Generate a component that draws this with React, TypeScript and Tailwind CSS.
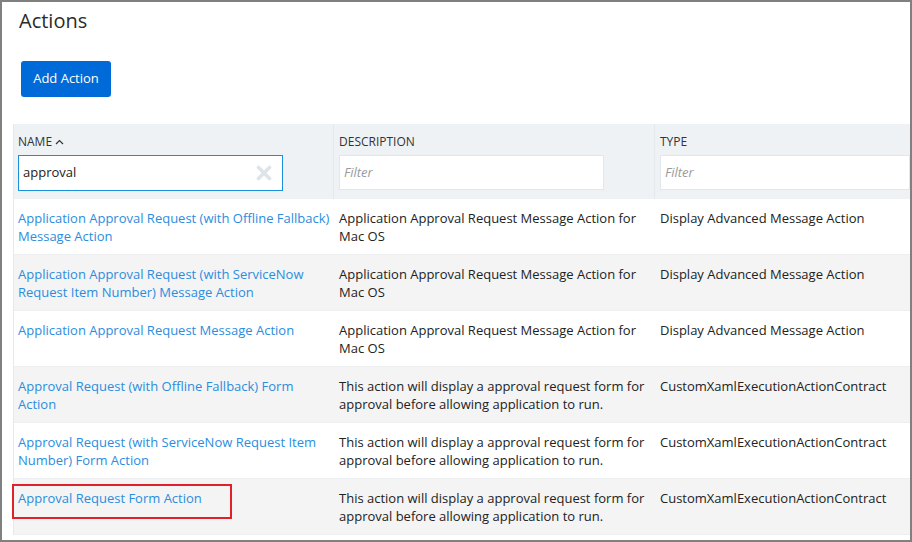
import React from "react";

type Row = { name: string[]; desc: string[]; type: string; highlight?: boolean };

const rows: Row[] = [
  {
    name: ["Application Approval Request (with Offline Fallback)", "Message Action"],
    desc: ["Application Approval Request Message Action for", "Mac OS"],
    type: "Display Advanced Message Action",
  },
  {
    name: ["Application Approval Request (with ServiceNow", "Request Item Number) Message Action"],
    desc: ["Application Approval Request Message Action for", "Mac OS"],
    type: "Display Advanced Message Action",
  },
  {
    name: ["Application Approval Request Message Action"],
    desc: ["Application Approval Request Message Action for", "Mac OS"],
    type: "Display Advanced Message Action",
  },
  {
    name: ["Approval Request (with Offline Fallback) Form", "Action"],
    desc: ["This action will display a approval request form for", "approval before allowing application to run."],
    type: "CustomXamlExecutionActionContract",
  },
  {
    name: ["Approval Request (with ServiceNow Request Item", "Number) Form Action"],
    desc: ["This action will display a approval request form for", "approval before allowing application to run."],
    type: "CustomXamlExecutionActionContract",
  },
  {
    name: ["Approval Request Form Action"],
    desc: ["This action will display a approval request form for", "approval before allowing application to run."],
    type: "CustomXamlExecutionActionContract",
    highlight: true,
  },
];

function Lines({ lines }: { lines: string[] }) {
  return (
    <>
      {lines.map((l, i) => (
        <div key={i} className="whitespace-nowrap">
          {l}
        </div>
      ))}
    </>
  );
}

export default function App() {
  return (
    <div
      className="w-[912px] h-[542px] bg-white border-2 border-[#808080] overflow-hidden text-[#222]"
      style={{ fontFamily: '"Open Sans", "Noto Sans", sans-serif' }}
    >
      <div className="pl-[17px] pt-[5px] h-[50px]">
        <h1 className="text-[20px] leading-[28px] text-[#2b2b2b] font-normal">Actions</h1>
      </div>
      <div className="pl-[19px] pt-[9px] h-[72px]">
        <button className="w-[90px] h-[36px] bg-[#006ad8] text-white text-[13px] rounded-[3px]">
          Add Action
        </button>
      </div>
      <div className="ml-[11px] border-l border-[#e6e9ec]">
        {/* header */}
        <div className="flex h-[75px] bg-[#eef2f5] text-[12px] text-[#333]">
          <div className="w-[320px] pl-[4px] pt-[9px] border-r border-[#e4e8ec]">
            <div className="flex items-center h-[18px] leading-[18px]">
              NAME
              <svg width="9" height="6" viewBox="0 0 9 6" className="ml-[3px]">
                <path d="M1 5 L4.5 1.5 L8 5" fill="none" stroke="#333" strokeWidth="1.2" />
              </svg>
            </div>
            <div className="mt-[4px] w-[265px] h-[36px] bg-white border border-[#1a90dd] flex items-center pl-[4px] pr-[10px]">
              <span className="text-[13px] text-[#222] flex-1">approval</span>
              <svg width="16" height="16" viewBox="0 0 16 16">
                <path d="M2.5 2.5 L13.5 13.5 M13.5 2.5 L2.5 13.5" stroke="#dfe4e9" strokeWidth="3.6" strokeLinecap="round" />
              </svg>
            </div>
          </div>
          <div className="w-[321px] pl-[5px] pt-[9px] border-r border-[#e4e8ec]">
            <div className="h-[18px] leading-[18px]">DESCRIPTION</div>
            <div className="mt-[4px] w-[265px] h-[35px] bg-white border border-[#e3e7eb] flex items-center pl-[4px]">
              <span className="text-[13px] italic text-[#9a9a9a]">Filter</span>
            </div>
          </div>
          <div className="flex-1 pl-[5px] pt-[9px]">
            <div className="h-[18px] leading-[18px]">TYPE</div>
            <div className="mt-[4px] h-[35px] bg-white border border-[#e3e7eb] flex items-center pl-[4px]">
              <span className="text-[13px] italic text-[#9a9a9a]">Filter</span>
            </div>
          </div>
        </div>
        {/* rows */}
        {rows.map((r, i) => (
          <div
            key={i}
            className={
              "flex h-[56px] text-[13px] leading-[18px] border-b border-[#eceeef] " +
              (i % 2 === 1 ? "bg-[#f4f4f4]" : "bg-white")
            }
          >
            <div className="relative w-[320px] pl-[4px] pt-[10px] text-[#2a8ddf]">
              <Lines lines={r.name} />
              {r.highlight && (
                <div className="absolute left-[-2px] top-[5px] w-[220px] h-[35px] border-2 border-[#e1202a]" />
              )}
            </div>
            <div className="w-[321px] pl-[5px] pt-[10px]">
              <Lines lines={r.desc} />
            </div>
            <div className="flex-1 pl-[5px] pt-[10px]">
              <div className="whitespace-nowrap">{r.type}</div>
            </div>
          </div>
        ))}
      </div>
    </div>
  );
}
